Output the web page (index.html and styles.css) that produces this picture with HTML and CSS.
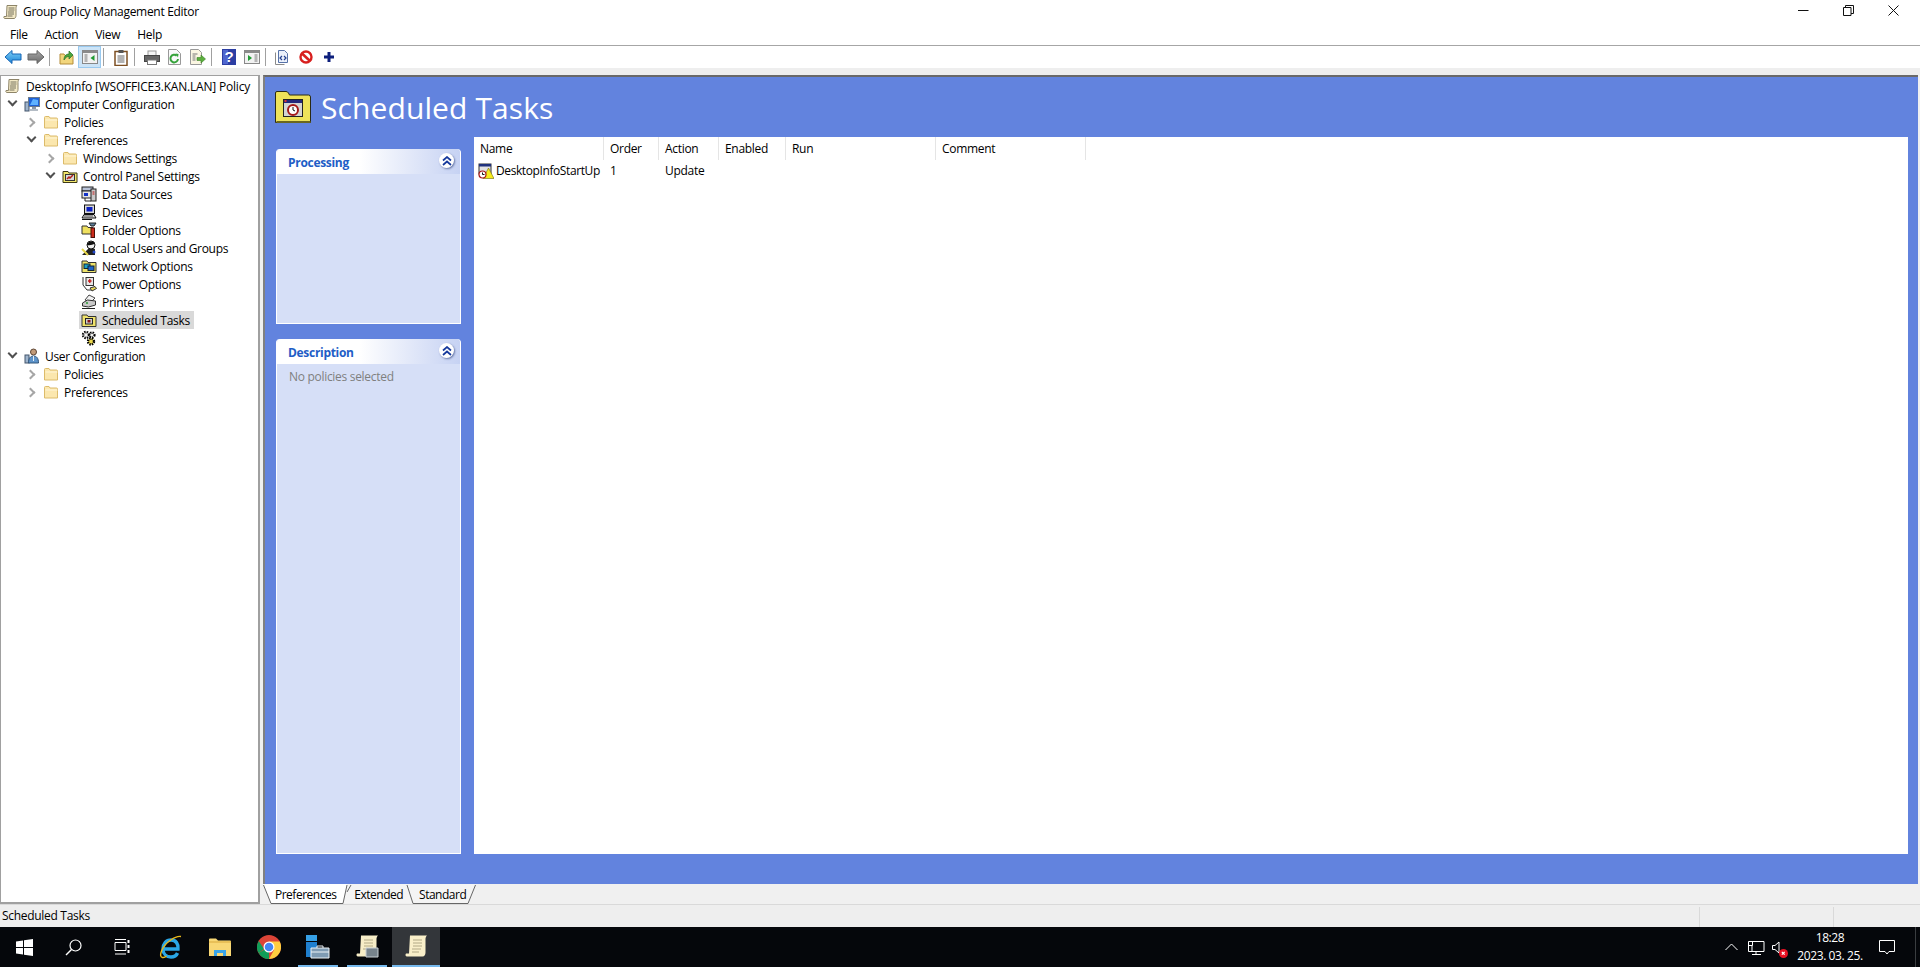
FILE: index.html
```html
<!DOCTYPE html>
<html lang="en">
<head>
    <meta charset="UTF-8">
    <title>Group Policy Management Editor</title>
    <link rel="stylesheet" href="styles.css">
</head>
<body>
    <svg class="sprite" xmlns="http://www.w3.org/2000/svg">
        <defs>
            <linearGradient id="gBlue" x1="0" y1="0" x2="0" y2="1"><stop offset="0" stop-color="#7fd0f7"/><stop offset="1" stop-color="#1b83d6"/></linearGradient>
            <linearGradient id="gGray" x1="0" y1="0" x2="0" y2="1"><stop offset="0" stop-color="#a8a8a8"/><stop offset="1" stop-color="#6a6a6a"/></linearGradient>
            <symbol id="scroll" viewBox="0 0 16 16">
                <path d="M4 1.500h10c-1 1-1 2-1 3v7c0 1.500-.8 3-2 3H2c-1 0-1.500-1-1-2h2.500z" fill="#f3e9c6" stroke="#8d8468"/>
                <path d="M5.500 4h6M5.500 6h6M5 8h6M5 10h6M4.500 12h5" stroke="#77725f" fill="none"/>
            </symbol>
            <symbol id="folder" viewBox="0 0 16 16">
                <path d="M1.500 14V3.500q0-1 1-1h3.500l1 1.500h6.500q1 0 1 1V14z" fill="#fbe7ae" stroke="#dcbb6a"/>
                <path d="M2.500 6h12" stroke="#fff6d8"/>
            </symbol>
            <symbol id="cpfolder" viewBox="0 0 16 16">
                <path d="M1 14.500V3.500h5l1 1.500h8v9.500z" fill="#f2e66c" stroke="#3f3a16"/>
                <rect x="3.500" y="6.500" width="9" height="6" fill="#d9d9d9" stroke="#333"/>
                <path d="M5 11l2-2 1 1 3-3" stroke="#b3201a" stroke-width="1.500" fill="none"/>
            </symbol>
            <symbol id="compcfg" viewBox="0 0 16 16">
                <rect x="1" y="6" width="4" height="9" fill="#9fb4cc" stroke="#44566c"/>
                <rect x="4.500" y="1.500" width="11" height="9" fill="#1d62d8" stroke="#6b7a8c"/>
                <path d="M6 9l3-6 5 1v5z" fill="#5fb2ff"/>
                <path d="M8 11h4v2H8z" fill="#8c98a6"/>
                <path d="M6 14h8" stroke="#6b7a8c"/>
            </symbol>
            <symbol id="usercfg" viewBox="0 0 16 16">
                <rect x="1" y="7" width="4" height="8" fill="#9fb4cc" stroke="#44566c"/>
                <circle cx="9.500" cy="4" r="3" fill="#c29a78" stroke="#5d4634"/>
                <path d="M4.500 15c0-5 2-7 5-7s5 2 5 7z" fill="#5d93c9" stroke="#33567b"/>
                <path d="M9.500 8v5" stroke="#e4eef7"/>
            </symbol>
            <symbol id="datasrc" viewBox="0 0 16 16">
                <rect x="1" y="1" width="11" height="4" fill="#b8c2d8" stroke="#222"/>
                <rect x="1" y="5" width="11" height="7" fill="#e6e6e6" stroke="#222"/>
                <rect x="3" y="7" width="4" height="3" fill="#1533c8"/>
                <rect x="10" y="3" width="5" height="12" fill="#c9c9c9" stroke="#222"/>
                <path d="M11.500 6h2M11.500 8h2" stroke="#c01818"/>
                <path d="M4 12v3h6" stroke="#222" fill="none"/>
            </symbol>
            <symbol id="devices" viewBox="0 0 16 16">
                <rect x="3.500" y="1" width="10" height="8.500" fill="#d8d8d8" stroke="#111"/>
                <rect x="5.500" y="3" width="6" height="4.500" fill="#0a1fc0"/>
                <path d="M1 14l2-3.500h10l2 3.500z" fill="#dcdcdc" stroke="#111"/>
                <path d="M3 12h9" stroke="#555"/>
                <path d="M1 15.500h10" stroke="#111"/>
            </symbol>
            <symbol id="foldopt" viewBox="0 0 16 16">
                <path d="M1 12V4h5l1 1.500h5V12z" fill="#efe05f" stroke="#333"/>
                <path d="M8 1l7 0-2 3-3 0z" fill="#5b7e9a" stroke="#222"/>
                <rect x="10" y="6" width="3.500" height="9.500" fill="#cc2b1c" stroke="#4a0f08"/>
            </symbol>
            <symbol id="users" viewBox="0 0 16 16">
                <path d="M1 15l8-8 5 2v6z" fill="#222"/>
                <circle cx="10" cy="5" r="4" fill="#efefef" stroke="#111"/>
                <path d="M6 5c0-4 7-5 8-1-3 0-4 2-8 1z" fill="#111"/>
                <path d="M1 9l6 6" stroke="#e6d64a" stroke-width="2"/>
                <circle cx="13" cy="12" r="1.500" fill="#2247c8"/>
            </symbol>
            <symbol id="network" viewBox="0 0 16 16">
                <path d="M1 14.500V3h5l1 1.500h8v10z" fill="#eee36a" stroke="#333"/>
                <rect x="3" y="6" width="6" height="4.500" fill="#16a0c8" stroke="#123"/>
                <rect x="7" y="8" width="6" height="4.500" fill="#1d65c8" stroke="#123"/>
            </symbol>
            <symbol id="power" viewBox="0 0 16 16">
                <rect x="5" y="1.500" width="7.500" height="8" fill="#e6e6e6" stroke="#333"/>
                <path d="M8.800 3v4M7 5h3.500" stroke="#c81818" stroke-width="1.300"/>
                <path d="M2 1v8l4 5h4" stroke="#333" fill="none"/>
                <path d="M9 12l5-1.500 1.500 2L11 15z" fill="#e8d95c" stroke="#333"/>
            </symbol>
            <symbol id="printer" viewBox="0 0 16 16">
                <path d="M8 1l6 3-4 4-6-2z" fill="#f2f2f2" stroke="#444"/>
                <path d="M1.500 9l5-3 8 1v4l-7 2-6-1z" fill="#c9c9c9" stroke="#333"/>
                <circle cx="6" cy="9" r="1" fill="#2a9a33"/>
                <path d="M1 14.500h13" stroke="#222"/>
            </symbol>
            <symbol id="schedfolder" viewBox="0 0 16 16">
                <path d="M1 14.500V3h5l1 1.500h8v10z" fill="#efe26a" stroke="#333"/>
                <rect x="4.500" y="6.500" width="7" height="5.500" fill="#cfcfcf" stroke="#222"/>
                <rect x="6.500" y="8" width="3" height="2.500" fill="#861313"/>
            </symbol>
            <symbol id="services" viewBox="0 0 16 16">
                <circle cx="5" cy="5" r="3" fill="#f2f2f2" stroke="#000" stroke-width="2.400" stroke-dasharray="1.400 1"/>
                <circle cx="11" cy="5" r="2.500" fill="#eee" stroke="#000" stroke-width="2.200" stroke-dasharray="1.400 1"/>
                <circle cx="10" cy="11.500" r="3" fill="#ecd94e" stroke="#000" stroke-width="2.400" stroke-dasharray="1.400 1"/>
            </symbol>
            <symbol id="taskrow" viewBox="0 0 16 16">
                <rect x="1" y="1" width="12" height="10" fill="#e2e2e2" stroke="#333"/>
                <rect x="1" y="1" width="12" height="2.500" fill="#20317c"/>
                <path d="M10.500 5L16 15.500H5z" fill="#f6ec1c" stroke="#6f6a10" stroke-width=".6"/>
                <circle cx="4.500" cy="11.500" r="3.500" fill="#fff" stroke="#a51818" stroke-width="1.200"/>
                <path d="M4.500 9.500v2h2" stroke="#111" fill="none"/>
            </symbol>
            <symbol id="bigfolder" viewBox="0 0 38 34">
                <path d="M1.500 32.500V3q0-1.500 1.500-1.500h9q1.500 0 2.500 1.500l1 2h19q2 0 2 2v25.500z" fill="#eee35a" stroke="#2a2a14" stroke-width="1"/>
                <path d="M2.500 32h34" stroke="#6b671e" stroke-width="2"/>
                <rect x="9.500" y="9.500" width="19" height="17" fill="#d4d4d4" stroke="#222"/>
                <rect x="10" y="10" width="18" height="3" fill="#23287c"/>
                <path d="M10.500 11h2" stroke="#d33" stroke-width="2"/>
                <circle cx="19" cy="20" r="5" fill="#fff" stroke="#a51818" stroke-width="2"/>
                <path d="M19 17v3l2 1" stroke="#111" fill="none"/>
            </symbol>
            <symbol id="chevs" viewBox="0 0 10 10">
                <path d="M1 4.500l4-3.500 4 3.500M1 9l4-3.500L9 9" fill="none" stroke="#16399c" stroke-width="1.700"/>
            </symbol>
        </defs>
    </svg>

    <div class="window">
        <header class="titlebar">
            <svg class="ico title-ico"><use href="#scroll"/></svg>
            <span class="title-text">Group Policy Management Editor</span>
            <div class="win-controls">
                <span class="win-btn"><svg width="11" height="11"><path d="M0 5.500h10.500" stroke="#111"/></svg></span>
                <span class="win-btn"><svg width="11" height="11"><path d="M.5 2.500h7.500v8H.5zM2.500 2.500v-2h8v8H8" fill="none" stroke="#111"/></svg></span>
                <span class="win-btn"><svg width="11" height="11"><path d="M.5.500l10 10M10.500.500l-10 10" stroke="#111"/></svg></span>
            </div>
        </header>

        <nav class="menubar">
            <span>File</span>
            <span>Action</span>
            <span>View</span>
            <span>Help</span>
        </nav>

        <div class="toolbar">
            <span class="tool"><svg width="18" height="16" viewBox="0 0 18 16"><path d="M1 8l7-6.500V5h9v6H8v3.500z" fill="url(#gBlue)" stroke="#1565b5"/></svg></span>
            <span class="tool"><svg width="18" height="16" viewBox="0 0 18 16"><path d="M17 8l-7-6.500V5H1v6h9v3.500z" fill="url(#gGray)" stroke="#666"/></svg></span>
            <i class="tool-sep"></i>
            <span class="tool"><svg width="16" height="16" viewBox="0 0 16 16"><path d="M1 15V5h4l1 1.500h8V15z" fill="#f2d67d" stroke="#b48d3a"/><path d="M5 11c0-4 2-6 5-6V2l4 4-4 4V7.500c-2 0-3.500 1-5 3.500z" fill="#4aa63c" stroke="#27702a" stroke-width=".7"/></svg></span>
            <span class="tool tool-on"><svg width="16" height="16" viewBox="0 0 16 16"><rect x=".5" y="1.500" width="15" height="13" fill="#f2f2f2" stroke="#888"/><rect x="1" y="2" width="14" height="2" fill="#8a8a8a"/><path d="M2.500 6h3M2.500 8h3M2.500 10h3M2.500 12h3" stroke="#777"/><path d="M12.500 6v6l-4-3z" fill="#209a33"/></svg></span>
            <i class="tool-sep"></i>
            <span class="tool tool-clip"><svg width="14" height="17" viewBox="0 0 14 17"><rect x="1" y="2.500" width="12" height="14" fill="#fff" stroke="#7d4f22" stroke-width="1.500"/><rect x="4.500" y="1" width="5" height="3" fill="#555"/><path d="M3.500 7h7M3.500 9h7M3.500 11h7M3.500 13h7" stroke="#666"/></svg></span>
            <i class="tool-sep"></i>
            <span class="tool tool-print"><svg width="16" height="15" viewBox="0 0 16 15"><rect x="4" y="1" width="8" height="5" fill="#f4f4f4" stroke="#999"/><rect x=".5" y="5.500" width="15" height="6" fill="#666" stroke="#444"/><rect x="3.500" y="10" width="9" height="4.500" fill="#fff" stroke="#777"/></svg></span>
            <span class="tool"><svg width="15" height="16" viewBox="0 0 15 16"><path d="M1.500.500h8l4 4v11h-12z" fill="#fafafa" stroke="#999"/><path d="M11 10a3.800 3.800 0 1 1-1.300-3.300" fill="none" stroke="#36a33b" stroke-width="2"/><path d="M8.500 4.500l3 .5-.5 3.500z" fill="#36a33b"/></svg></span>
            <span class="tool"><svg width="17" height="16" viewBox="0 0 17 16"><path d="M1.500.500h8l3 3v12h-11z" fill="#fbf6e2" stroke="#999"/><path d="M3.500 5h5M3.500 7h3M3.500 9h3M3.500 11h3" stroke="#777"/><path d="M8 8.500h4V6l4.500 4-4.500 4v-2.500H8z" fill="#5cae3e" stroke="#3b8127" stroke-width=".6"/></svg></span>
            <i class="tool-sep"></i>
            <span class="tool"><svg width="14" height="16" viewBox="0 0 14 16"><rect width="14" height="16" fill="#2c3ea3"/><rect x="1" y="1" width="5" height="14" fill="#4f66cf"/><text class="help-q" x="7" y="13">?</text></svg></span>
            <span class="tool"><svg width="16" height="16" viewBox="0 0 16 16"><rect x=".5" y="1.500" width="15" height="13" fill="#f2f2f2" stroke="#888"/><rect x="1" y="2" width="14" height="2" fill="#8a8a8a"/><path d="M10.500 6h3M10.500 8h3M10.500 10h3M10.500 12h3" stroke="#777"/><path d="M4 6v6l4-3z" fill="#209a33"/></svg></span>
            <i class="tool-sep"></i>
            <span class="tool"><svg width="15" height="16" viewBox="0 0 15 16"><path d="M3.500 1.500h6l3 3v9h-9z" fill="#eaf0fb" stroke="#5672a8"/><path d="M.5 3.500v12h9" fill="none" stroke="#8a8a8a"/><path d="M7 7L5 9l2 2M9 7l2 2-2 2" fill="none" stroke="#23408f" stroke-width="1.200"/></svg></span>
            <span class="tool"><svg width="14" height="14" viewBox="0 0 14 14"><circle cx="7" cy="7" r="5.500" fill="#fff" stroke="#d8201f" stroke-width="2.400"/><path d="M3 3.500l7.500 7" stroke="#d8201f" stroke-width="2.600"/></svg></span>
            <span class="tool tool-plus"><svg width="10" height="10" viewBox="0 0 10 10"><path d="M5 0v10M0 5h10" stroke="#0d1f7c" stroke-width="3"/></svg></span>
        </div>

        <div class="band"></div>

        <main class="main">
            <aside class="tree">
                <div class="row d-root"><span class="node"><svg class="ico"><use href="#scroll"/></svg><span>DesktopInfo [WSOFFICE3.KAN.LAN] Policy</span></span></div>
                <div class="row d1"><i class="arrow open"></i><span class="node"><svg class="ico"><use href="#compcfg"/></svg><span>Computer Configuration</span></span></div>
                <div class="row d2"><i class="arrow"></i><span class="node"><svg class="ico"><use href="#folder"/></svg><span>Policies</span></span></div>
                <div class="row d2"><i class="arrow open"></i><span class="node"><svg class="ico"><use href="#folder"/></svg><span>Preferences</span></span></div>
                <div class="row d3"><i class="arrow"></i><span class="node"><svg class="ico"><use href="#folder"/></svg><span>Windows Settings</span></span></div>
                <div class="row d3"><i class="arrow open"></i><span class="node"><svg class="ico"><use href="#cpfolder"/></svg><span>Control Panel Settings</span></span></div>
                <div class="row d4"><span class="node"><svg class="ico"><use href="#datasrc"/></svg><span>Data Sources</span></span></div>
                <div class="row d4"><span class="node"><svg class="ico"><use href="#devices"/></svg><span>Devices</span></span></div>
                <div class="row d4"><span class="node"><svg class="ico"><use href="#foldopt"/></svg><span>Folder Options</span></span></div>
                <div class="row d4"><span class="node"><svg class="ico"><use href="#users"/></svg><span>Local Users and Groups</span></span></div>
                <div class="row d4"><span class="node"><svg class="ico"><use href="#network"/></svg><span>Network Options</span></span></div>
                <div class="row d4"><span class="node"><svg class="ico"><use href="#power"/></svg><span>Power Options</span></span></div>
                <div class="row d4"><span class="node"><svg class="ico"><use href="#printer"/></svg><span>Printers</span></span></div>
                <div class="row d4"><span class="node selected"><svg class="ico"><use href="#schedfolder"/></svg><span>Scheduled Tasks</span></span></div>
                <div class="row d4"><span class="node"><svg class="ico"><use href="#services"/></svg><span>Services</span></span></div>
                <div class="row d1"><i class="arrow open"></i><span class="node"><svg class="ico"><use href="#usercfg"/></svg><span>User Configuration</span></span></div>
                <div class="row d2"><i class="arrow"></i><span class="node"><svg class="ico"><use href="#folder"/></svg><span>Policies</span></span></div>
                <div class="row d2"><i class="arrow"></i><span class="node"><svg class="ico"><use href="#folder"/></svg><span>Preferences</span></span></div>
            </aside>

            <section class="content">
                <div class="pane">
                    <div class="pane-head">
                        <svg class="big-ico"><use href="#bigfolder"/></svg>
                        <h1>Scheduled Tasks</h1>
                    </div>
                    <div class="pane-body">
                        <div class="side">
                            <div class="card card-proc">
                                <div class="card-head"><span>Processing</span><b class="collapse"><svg width="10" height="10"><use href="#chevs"/></svg></b></div>
                            </div>
                            <div class="card card-desc">
                                <div class="card-head"><span>Description</span><b class="collapse"><svg width="10" height="10"><use href="#chevs"/></svg></b></div>
                                <p class="card-text">No policies selected</p>
                            </div>
                        </div>
                        <div class="list">
                            <div class="list-head">
                                <span class="col c-name">Name</span>
                                <span class="col c-order">Order</span>
                                <span class="col c-action">Action</span>
                                <span class="col c-enabled">Enabled</span>
                                <span class="col c-run">Run</span>
                                <span class="col c-comment">Comment</span>
                            </div>
                            <div class="list-row">
                                <span class="cell c-name cell-name"><svg class="ico"><use href="#taskrow"/></svg>DesktopInfoStartUp</span>
                                <span class="cell c-order">1</span>
                                <span class="cell c-action">Update</span>
                            </div>
                        </div>
                    </div>
                </div>
                <div class="tabs">
                    <svg class="tab-shapes" width="240" height="20" viewBox="0 0 240 20">
                        <path d="M84 0H144L150 19H80z" fill="#f4f4f4"/>
                        <path d="M144 0H212L205 19H150z" fill="#f4f4f4"/>
                        <path d="M0 0H84L80 19H8z" fill="#fff"/>
                        <path d="M.5 1L8 19.500H80L84 1M84 8L88 1M144 1L150 19.500H205L212.500 1" fill="none" stroke="#666"/>
                    </svg>
                    <span class="tab tab-pref">Preferences</span>
                    <span class="tab tab-ext">Extended</span>
                    <span class="tab tab-std">Standard</span>
                </div>
            </section>
        </main>

        <footer class="statusbar">
            <span class="status-main">Scheduled Tasks</span>
            <span class="status-cell"></span>
            <span class="status-cell status-last"></span>
        </footer>
    </div>

    <div class="taskbar">
        <div class="task-left">
            <span class="task-btn"><svg width="17" height="17" viewBox="0 0 17 17"><path d="M0 2.500l7-1v6.500H0zM8 1.300L17 0v8H8zM0 9h7v6.500l-7-1zM8 9h9v8l-9-1.300z" fill="#fff"/></svg></span>
            <span class="task-btn"><svg width="17" height="17" viewBox="0 0 17 17"><circle cx="10.500" cy="6.500" r="5.500" fill="none" stroke="#fff" stroke-width="1.200"/><path d="M6.500 10.500L1 16" stroke="#fff" stroke-width="1.400"/></svg></span>
            <span class="task-btn"><svg width="17" height="16" viewBox="0 0 17 16"><path d="M1 3.500h11v8H1zM1 .5h11M1 15h11" fill="none" stroke="#fff"/><path d="M14.500 1v3M14.500 6v3M14.500 11v3" stroke="#fff" stroke-width="2"/></svg></span>
            <span class="task-btn task-ie"><svg width="24" height="24" viewBox="0 0 24 24"><path d="M5 14h14c.5-5-2-9-7-9-5 0-8 4-8 9 0 5 3.500 8 8 8 3 0 5.500-1.500 6.500-4" fill="none" stroke="#2aa6e6" stroke-width="3.400"/><path d="M22 1.500C17 .5 6 7 2.500 16c-1.500 4-1 6 1 6.500 1 .2 3-.5 4-1.500" fill="none" stroke="#e8b71b" stroke-width="1.400"/></svg></span>
            <span class="task-btn"><svg width="22" height="19" viewBox="0 0 22 19"><path d="M0 18V1.500Q0 .500 1 .500h6l2 2h12q1 0 1 1V18z" fill="#f8d775"/><path d="M0 4h22" stroke="#d9a93c" stroke-width="1"/><path d="M5 18v-6h12v6h-3v-3H8v3z" fill="#3aa4e8"/></svg></span>
            <span class="task-btn"><svg width="24" height="24" viewBox="0 0 24 24"><circle cx="12" cy="12" r="12" fill="#db4437"/><path d="M12 12L1.600 18A12 12 0 0 0 12 24z" fill="#0f9d58"/><path d="M1.600 18A12 12 0 0 1 1.700 6L7 14z" fill="#0f9d58"/><path d="M12 6.600h10.800A12 12 0 0 1 12 24l5-9z" fill="#ffcd40"/><circle cx="12" cy="12" r="5.500" fill="#fff"/><circle cx="12" cy="12" r="4.300" fill="#4285f4"/></svg></span>
            <span class="task-btn task-open"><svg width="24" height="24" viewBox="0 0 24 24"><rect x="0" y="0" width="11" height="6" fill="#36a0e6"/><rect x="0" y="7" width="11" height="15" fill="#1f7fcf"/><path d="M5 13h18v10H5z" fill="#7f9bb3" stroke="#eef3f7"/><path d="M11 13v-2h6v2" fill="none" stroke="#eef3f7"/><path d="M5 17h18" stroke="#eef3f7"/></svg></span>
            <span class="task-btn task-open"><svg width="23" height="24" viewBox="0 0 23 24"><path d="M5 .5h17c-1.500 1.500-1.500 3-1.500 4v13c0 2-1 4-3 4H2c-1.500 0-2-1.500-1-3h3z" fill="#f7edc7"/><path d="M8 5h9M8 8h9M8 11h9M7 14h6" stroke="#b2a986"/><path d="M10 13h12v9H10z" fill="#78848d" stroke="#c9cfd3"/></svg></span>
            <span class="task-btn task-open task-active"><svg width="23" height="24" viewBox="0 0 23 24"><path d="M5 .5h17c-1.500 1.500-1.500 3-1.500 4v13c0 2-1 4-3 4H2c-1.500 0-2-1.500-1-3h3z" fill="#f9efc9"/><path d="M8 5h9M8 8h9M8 11h9M7 14h9M7 17h7" stroke="#b2a986"/></svg></span>
        </div>
        <div class="tray">
            <svg class="tray-chev" width="13" height="8" viewBox="0 0 13 8"><path d="M.5 7l6-6 6 6" fill="none" stroke="#fff"/></svg>
            <svg class="tray-net" width="17" height="15" viewBox="0 0 17 15"><path d="M.5 1.500h15.500v10H.5zM4 11.500v-6h-3.500M8 11.500V14M4 14.500h9M.5 5.500h4V1.500" fill="none" stroke="#fff"/></svg>
            <span class="tray-vol">
                <svg width="17" height="13" viewBox="0 0 17 13"><path d="M.5 4.500h2.500l4-3.500v11l-4-3.500H.5z" fill="none" stroke="#fff"/></svg>
                <i class="vol-x"><svg width="9" height="9" viewBox="0 0 9 9"><circle cx="4.500" cy="4.500" r="4.500" fill="#e81123"/><path d="M2.800 2.800l2.900 2.900M5.700 2.800L2.800 5.700" stroke="#fff" stroke-width="1.200"/></svg></i>
            </span>
            <div class="clock">
                <span>18:28</span>
                <span>2023. 03. 25.</span>
            </div>
            <svg class="tray-note" width="16" height="15" viewBox="0 0 16 15"><path d="M.5.500h15v11H10l-2 2.500-2-2.500H.5z" fill="none" stroke="#fff"/></svg>
            <i class="show-desktop"></i>
        </div>
    </div>
</body>
</html>
```

FILE: styles.css
```css
html, body {
    margin: 0;
    padding: 0;
    height: 100%;
    overflow: hidden;
}

body {
    background-color: #ffffff;
    font-family: "Open Sans", "Noto Sans", sans-serif;
    font-size: 12px;
    color: #000000;
    display: flex;
    flex-direction: column;
}

.sprite {
    width: 0;
    height: 0;
    position: absolute;
}

.ico {
    width: 16px;
    height: 16px;
    flex: none;
}

.window {
    height: 927px;
    display: flex;
    flex-direction: column;
}

/* title bar */
.titlebar {
    height: 23px;
    display: flex;
    align-items: center;
    padding-left: 3px;
}

.title-text {
    margin-left: 4px;
    letter-spacing: -0.3px;
}

.win-controls {
    margin-left: auto;
    margin-right: 4px;
    margin-bottom: 3px;
    display: flex;
}

.win-btn {
    width: 45px;
    height: 20px;
    display: flex;
    align-items: center;
    justify-content: center;
}

/* menu */
.menubar {
    height: 22px;
    display: flex;
    align-items: center;
    gap: 17px;
    padding-left: 10px;
    border-bottom: 1px solid #a6a6a6;
    letter-spacing: -0.3px;
}

/* toolbar */
.toolbar {
    height: 22px;
    display: flex;
    align-items: center;
    padding-left: 1px;
}

.tool {
    width: 23px;
    height: 22px;
    display: flex;
    align-items: center;
    justify-content: center;
    box-sizing: border-box;
}

.tool-on {
    background-color: #cce4f7;
    border: 1px solid #99c9ef;
}

.tool-sep {
    width: 1px;
    height: 18px;
    margin: 0 5px 0 2px;
    background-color: #a0a0a0;
}

.band {
    height: 7px;
    background-color: #eeeeee;
}

/* main area */
.main {
    flex: 1;
    min-height: 0;
    display: flex;
    background-color: #f0f0f0;
}

.tree {
    width: 257px;
    background-color: #ffffff;
    border: 1px solid #a0a0a0;
    border-width: 1px 2px 2px 1px;
    padding-top: 1px;
    letter-spacing: -0.3px;
}

.row {
    height: 18px;
    display: flex;
    align-items: center;
    white-space: nowrap;
}

.d-root { padding-left: 2px; letter-spacing: -0.2px; }
.d1 { padding-left: 5px; }
.d2 { padding-left: 24px; }
.d3 { padding-left: 43px; }
.d4 { padding-left: 78px; }

.arrow {
    width: 14px;
    height: 18px;
    margin-right: 2px;
    position: relative;
    flex: none;
}

.arrow::after {
    content: "";
    position: absolute;
    left: 2px;
    top: 6px;
    width: 5px;
    height: 5px;
    border: solid #a6a6a6;
    border-width: 2px 2px 0 0;
    transform: rotate(45deg);
}

.arrow.open::after {
    left: 3px;
    top: 3px;
    border-color: #505050;
    transform: rotate(135deg);
}

.node {
    height: 18px;
    display: inline-flex;
    align-items: center;
    gap: 5px;
    padding: 0 4px 0 2px;
}

.node.selected {
    background-color: #d9d9d9;
}

/* right side */
.content {
    flex: 1;
    min-width: 0;
    display: flex;
    flex-direction: column;
    margin-left: 3px;
}

.pane {
    flex: 1;
    min-height: 0;
    margin-right: 2px;
    background-color: #6283de;
    border-top: 2px solid #696969;
    border-left: 2px solid #808080;
    display: flex;
    flex-direction: column;
}

.pane-head {
    height: 60px;
    display: flex;
    align-items: center;
    padding-left: 9px;
    box-sizing: border-box;
}

.big-ico {
    width: 38px;
    height: 34px;
    flex: none;
}

.pane-head h1 {
    margin: 0 0 0 9px;
    font-size: 30px;
    font-weight: 400;
    color: #ffffff;
    letter-spacing: 0.1px;
}

.pane-body {
    flex: 1;
    min-height: 0;
    display: flex;
    padding: 0 10px 30px 11px;
}

.side {
    width: 185px;
    flex: none;
    margin-right: 13px;
    display: flex;
    flex-direction: column;
    gap: 15px;
    padding-top: 12px;
}

.card {
    background-color: #d6dff7;
    border: 1px solid #ffffff;
    border-top: none;
    border-radius: 4px 4px 0 0;
}

.card-proc {
    height: 174px;
}

.card-desc {
    flex: 1;
}

.card-head {
    height: 25px;
    display: flex;
    align-items: center;
    justify-content: space-between;
    padding: 0 6px 0 11px;
    border-radius: 4px 4px 0 0;
    background: linear-gradient(to right, #ffffff 45%, #c6d2f3);
    color: #215dc6;
    font-weight: 700;
    font-size: 12px;
    letter-spacing: -0.3px;
}

.card-head span {
    padding-top: 2px;
}

.collapse {
    width: 15px;
    height: 15px;
    margin-bottom: 2px;
    border-radius: 50%;
    background-color: #ffffff;
    box-shadow: 1px 1px 2px rgba(40, 60, 120, 0.6);
    display: flex;
    align-items: center;
    justify-content: center;
}

.card-text {
    margin: 4px 0 0 12px;
    color: #7f7f7f;
    letter-spacing: -0.3px;
}

.list {
    flex: 1;
    min-width: 0;
    background-color: #ffffff;
    letter-spacing: -0.3px;
}

.list-head {
    height: 23px;
    display: flex;
}

.col {
    box-sizing: border-box;
    display: flex;
    align-items: center;
    padding-left: 6px;
    border-right: 1px solid #e5e5e5;
}

.c-name { width: 130px; }
.c-order { width: 55px; }
.c-action { width: 60px; }
.c-enabled { width: 67px; }
.c-run { width: 150px; }
.c-comment { width: 150px; }

.list-row {
    height: 21px;
    display: flex;
    align-items: center;
}

.cell {
    box-sizing: border-box;
    padding-left: 6px;
}

.cell-name {
    display: flex;
    align-items: center;
    gap: 2px;
    padding-left: 4px;
    letter-spacing: -0.4px;
}

/* tabs */
.tabs {
    height: 20px;
    display: flex;
    align-items: center;
    position: relative;
}

.tab-shapes {
    position: absolute;
    left: 0;
    top: 0;
}

.tab {
    position: relative;
    letter-spacing: -0.5px;
}

.tab-pref { margin-left: 12px; }
.tab-ext { margin-left: 18px; }
.tab-std { margin-left: 16px; }

/* status bar */
.statusbar {
    height: 23px;
    display: flex;
    background-color: #eeeeee;
    border-top: 1px solid #d9d9d9;
    box-sizing: border-box;
}

.status-main {
    width: 1699px;
    flex: none;
    padding-left: 2px;
    line-height: 22px;
    box-sizing: border-box;
    letter-spacing: -0.3px;
}

.status-cell {
    width: 133px;
    margin: 2px 0 0;
    flex: none;
    border-left: 1px solid #d9d9d9;
}

.status-last {
    width: auto;
    flex: 1;
}

/* taskbar */
.taskbar {
    height: 40px;
    display: flex;
    justify-content: space-between;
    background-color: #05070b;
    color: #ffffff;
}

.task-left {
    display: flex;
}

.task-btn {
    width: 48px;
    height: 40px;
    margin-right: 1px;
    box-sizing: border-box;
    display: flex;
    align-items: center;
    justify-content: center;
    position: relative;
}

.task-open::after {
    content: "";
    position: absolute;
    left: 4px;
    right: 4px;
    bottom: 0;
    height: 2px;
    background-color: #76b9ed;
}

.task-active {
    background-color: #33363a;
}

.task-active::after {
    left: 0;
    right: 0;
}

.tray {
    display: flex;
    align-items: center;
}

.tray-chev { margin-right: 10px; }
.tray-net { margin-right: 7px; }

.tray-vol {
    position: relative;
    width: 20px;
    height: 13px;
    display: block;
}

.vol-x {
    position: absolute;
    left: 7px;
    top: 4px;
    width: 9px;
    height: 9px;
}

.clock {
    width: 66px;
    margin-left: 5px;
    display: flex;
    flex-direction: column;
    align-items: center;
    gap: 2px;
    line-height: 16px;
    letter-spacing: -0.4px;
    white-space: nowrap;
}

.tray-note {
    margin-left: 16px;
    margin-right: 20px;
}

.show-desktop {
    width: 1px;
    height: 40px;
    background-color: #3a3d40;
    margin-right: 4px;
}

.help-q {
    font-family: "Liberation Sans", sans-serif;
    font-size: 15px;
    font-weight: 700;
    fill: #ffffff;
    text-anchor: middle;
}
```
